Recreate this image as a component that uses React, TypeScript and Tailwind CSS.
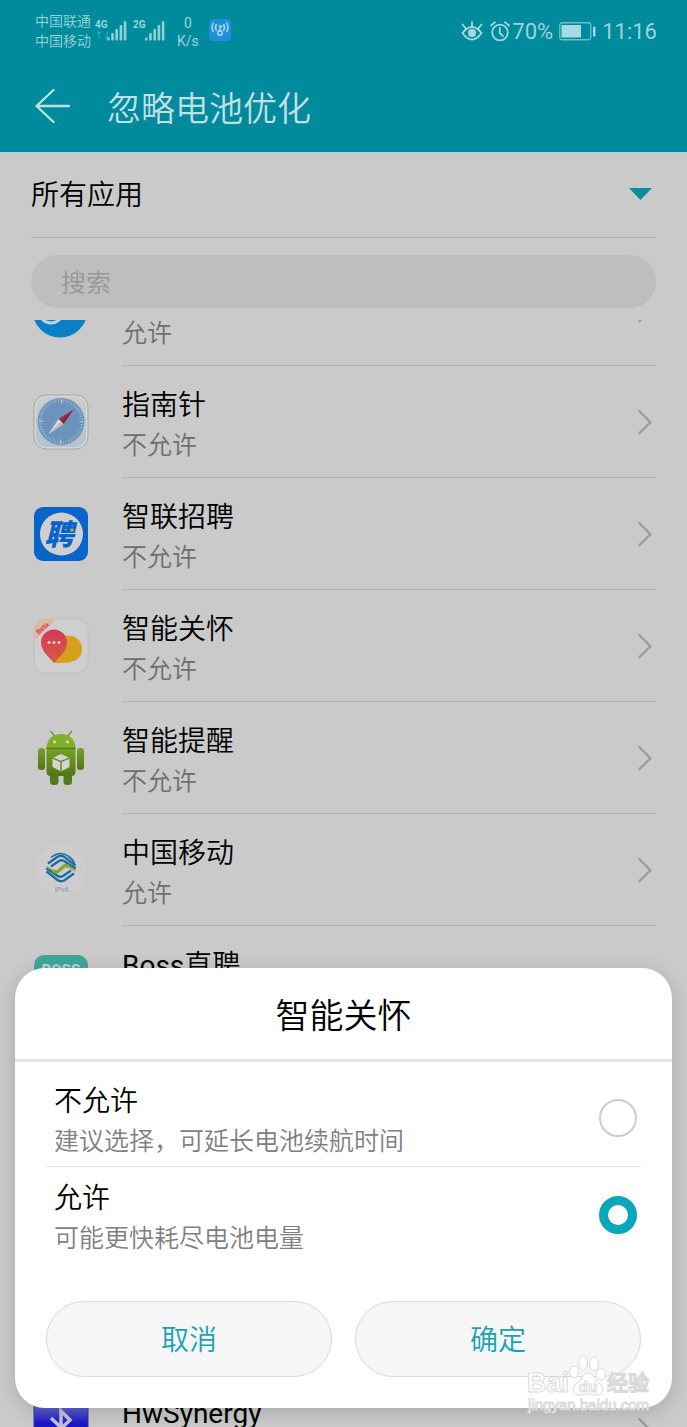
import React from 'react';

interface AppItem {
  id: string;
  name: string;
  status: string;
  icon: React.ReactNode;
}

const SignalBars: React.FC = () => (
  <svg className="w-5 h-[21px]" viewBox="0 0 20 21" fill="#8fd0d8">
    <rect x="0" y="17.500" width="2.600" height="3" rx="1" />
    <rect x="4.200" y="13" width="2.600" height="7.500" rx="1" />
    <rect x="8.400" y="9" width="2.600" height="11.500" rx="1" />
    <rect x="12.600" y="5" width="2.600" height="15.500" rx="1" />
    <rect x="16.800" y="1" width="2.600" height="19.500" rx="1" />
  </svg>
);

const HotspotIcon: React.FC = () => (
  <svg className="w-[22px] h-[22px]" viewBox="0 0 22 22">
    <rect width="22" height="22" rx="4" fill="#1f8fdc" />
    <g fill="none" stroke="#b9dcf0" strokeWidth="1.4" strokeLinecap="round">
      <circle cx="11" cy="14" r="2.300" />
      <path d="M11 11.500V6.500M11 7.500h2" />
      <path d="M7.300 5.500q-1.800 2.800 0 5.800M4.300 4q-2.600 4.300 0 8.600M14.700 5.500q1.800 2.800 0 5.800M17.700 4q2.600 4.300 0 8.600" />
    </g>
  </svg>
);

const EyeIcon: React.FC = () => (
  <svg className="w-[22px] h-[20px]" viewBox="0 0 22 20" fill="none" stroke="#a3d8de" strokeWidth="1.800" strokeLinecap="round">
    <path d="M1.500 12Q6 6 11 6t9.500 6Q16 18.500 11 18.500T1.500 12Z" />
    <circle cx="11" cy="12" r="4" fill="#a3d8de" stroke="none" />
    <path d="M11 1v4.500M1.500 3.500l3 3.800M20.500 3.500l-3 3.800" />
  </svg>
);

const AlarmIcon: React.FC = () => (
  <svg className="w-[20px] h-[21px]" viewBox="0 0 20 21" fill="none" stroke="#a3d8de" strokeWidth="1.800" strokeLinecap="round">
    <circle cx="10" cy="11.500" r="7.800" />
    <path d="M9.800 7v5l3 3M1 4.500L5 1.300M19 4.500L15 1.300" />
  </svg>
);

const BatteryIcon: React.FC = () => (
  <svg className="w-[37px] h-[19px]" viewBox="0 0 37 19">
    <rect x=".75" y=".75" width="31" height="17" rx="2.500" fill="none" stroke="#6dbfca" strokeWidth="1.300" />
    <rect x="2.500" y="3" width="19.500" height="12.500" fill="#a6dbe1" />
    <rect x="34" y="4.500" width="2.500" height="10" rx="1" fill="#a3d8de" />
  </svg>
);

const ChevronIcon: React.FC = () => (
  <svg className="w-[14px] h-[26px]" viewBox="0 0 14 26" fill="none" stroke="#9a9a9a" strokeWidth="2.300" strokeLinecap="round" strokeLinejoin="round">
    <path d="M1.500 2.200L12.500 13.300L1.500 24" />
  </svg>
);

const BrowserIcon: React.FC = () => (
  <svg className="w-14 h-14" viewBox="0 0 56 56">
    <circle cx="27" cy="28" r="27.500" fill="#0a80c4" />
    <circle cx="18" cy="29" r="13.500" fill="#b9d4e2" />
    <circle cx="18" cy="29" r="10.500" fill="#0a80c4" />
    <path d="M50.500 44L56 36V56H42Z" fill="#cacaca" />
  </svg>
);

const CompassIcon: React.FC = () => (
  <svg className="w-14 h-14" viewBox="0 0 56 56">
    <defs>
      <linearGradient id="compassFrame" x1="0" y1="0" x2="0" y2="1">
        <stop offset="0" stopColor="#cdcdcd" />
        <stop offset="1" stopColor="#b4c2ce" />
      </linearGradient>
    </defs>
    <rect x="1" y="1" width="54" height="54" rx="12" fill="#d6d6d6" stroke="#a6a6a6" strokeWidth="1" />
    <rect x="3" y="3" width="50" height="50" rx="10" fill="url(#compassFrame)" />
    <circle cx="28" cy="27.500" r="23.500" fill="#6b93bb" />
    <circle cx="28" cy="27.500" r="21" fill="none" stroke="#9db8d1" strokeWidth="2.500" strokeDasharray="1 1.720" />
    <circle cx="28" cy="27.500" r="20" fill="none" stroke="#c8d5e1" strokeWidth="4.500" strokeDasharray="1 30.416" strokeDashoffset=".5" />
    <path d="M40.500 15.500L25.500 25L30.500 30Z" fill="#a82e3d" />
    <path d="M40.500 15.500L28 27.500L30.500 30Z" fill="#8a2030" />
    <path d="M15.500 40L25.500 25L30.500 30Z" fill="#dadada" />
    <path d="M15.500 40L28 27.500L30.500 30Z" fill="#b9bec4" />
  </svg>
);

const ZhaopinIcon: React.FC = () => (
  <svg className="w-14 h-14" viewBox="0 0 56 56">
    <rect x="1" y="1" width="54" height="54" rx="9" fill="#0864c9" />
    <circle cx="28.500" cy="28" r="21.500" fill="#cfcfd1" />
    <text
      x="26"
      y="39"
      textAnchor="middle"
      fontSize="29"
      fontWeight="900"
      fontStyle="italic"
      fontFamily="'Noto Sans CJK SC', sans-serif"
      fill="#0864c9"
    >
      聘
    </text>
    <circle cx="39" cy="24" r="1.800" fill="#8fba3c" />
  </svg>
);

const CareIcon: React.FC = () => (
  <svg className="w-14 h-14" viewBox="0 0 56 56">
    <defs>
      <linearGradient id="carePin" x1="0" y1="0" x2="0" y2="1">
        <stop offset="0" stopColor="#d23b58" />
        <stop offset="1" stopColor="#d65a42" />
      </linearGradient>
      <clipPath id="careClip">
        <rect x="1" y="1" width="54" height="54" rx="12" />
      </clipPath>
    </defs>
    <rect x="1" y="1" width="54" height="54" rx="12" fill="#cfcfcf" stroke="#bdbdbd" strokeWidth=".8" />
    <g clipPath="url(#careClip)">
      <path d="M0 24L24 0H8L0 8Z" fill="#e0b4a6" />
      <text x="11" y="12" transform="rotate(-42 11 12)" textAnchor="middle" fontSize="7" fontWeight="700" fontFamily="Roboto, sans-serif" fill="#cf4a42">
        Beta
      </text>
    </g>
    <path d="M22 45C31 45 49 46 49 31C49 22 42 17.500 35 17.500C25 17.500 20 28 22 45Z" fill="#d6a01d" />
    <path d="M21 45C15 38 8 32.500 8 24.500C8 17 14 11.500 21 11.500C28 11.500 34 17 34 24.500C34 33 27 38 21 45Z" fill="url(#carePin)" />
    <g fill="#ecd5d5">
      <circle cx="16" cy="24.500" r="1.500" />
      <circle cx="21" cy="24.500" r="1.500" />
      <circle cx="26" cy="24.500" r="1.500" />
    </g>
  </svg>
);

const AndroidIcon: React.FC = () => (
  <svg className="w-14 h-14" viewBox="0 0 56 56">
    <defs>
      <linearGradient id="robot" x1="0" y1="0" x2="0" y2="1">
        <stop offset="0" stopColor="#76a325" />
        <stop offset="1" stopColor="#4f7619" />
      </linearGradient>
    </defs>
    <path d="M18 1.500l4 5M38.500 1.500l-4 5" stroke="#6f8f3e" strokeWidth="1.300" strokeLinecap="round" />
    <rect x="17" y="42" width="8.500" height="13" rx="3.500" fill="#527a1a" />
    <rect x="30.500" y="42" width="8.500" height="13" rx="3.500" fill="#527a1a" />
    <rect x="5" y="18" width="7" height="22" rx="3" fill="url(#robot)" />
    <rect x="44" y="18" width="7" height="22" rx="3" fill="url(#robot)" />
    <path d="M13.500 18H42.500V42Q42.500 46 38 46H18Q13.500 46 13.500 42Z" fill="url(#robot)" />
    <path d="M13.500 18C14 9 20 4 28 4S42 9 42.500 18Z" fill="#7fb02b" />
    <path d="M13.500 18.300H42.500" stroke="#4f7619" strokeWidth="1.200" />
    <circle cx="21.500" cy="12" r="1.400" fill="#d9e2cc" />
    <circle cx="34.500" cy="12" r="1.400" fill="#d9e2cc" />
    <path d="M28 24L36.500 28V37L28 41.500L19.500 37V28Z" fill="#d2d4cd" />
    <path d="M19.500 28L28 31.500L36.500 28M28 31.500V41.500" fill="none" stroke="#587f20" strokeWidth="1.300" />
  </svg>
);

const ChinaMobileIcon: React.FC = () => (
  <svg className="w-14 h-14" viewBox="0 0 56 56">
    <circle cx="28" cy="28" r="26" fill="#cdcdcd" />
    <g fill="none" strokeLinejoin="round">
      <g stroke="#1a6ea3">
        <path d="M18 15.500Q23 11.500 28 11.500Q32 11.500 35 14Q40 17.500 41.500 21.500" strokeWidth="1.600" />
        <path d="M15 21.500L25 14.500Q28.500 12.800 32 15.300Q37 19.500 42.500 23.500" strokeWidth="2.400" />
        <path d="M18 24.500L26 19Q29 17.200 32 19.500Q36.500 23 42.800 26.500" strokeWidth="2.400" />
        <path d="M38 28.500L30 34Q27 35.800 24 33.500Q19.500 30 13.200 26.500" strokeWidth="2.400" />
        <path d="M41 31.500L31 38.500Q27.500 40.200 24 37.700Q19 33.500 13.500 29.500" strokeWidth="2.400" />
      </g>
      <path d="M13.300 24.500Q18 27 21 29.500Q23.500 31 26 29L30.500 24.500Q33 22.300 35.500 24.500Q38.500 27 42.600 28.800" stroke="#84a92a" strokeWidth="1.300" />
      <path d="M20 28.500Q23 31 25.500 29L30.500 24.500Q33 22.500 36 25" stroke="#84a92a" strokeWidth="3.400" />
    </g>
    <text x="28.500" y="50" textAnchor="middle" fontSize="7" fontFamily="Roboto, sans-serif" fill="#7b98ad">
      IPv6
    </text>
  </svg>
);

const BossIcon: React.FC = () => (
  <svg className="w-14 h-14" viewBox="0 0 56 56">
    <rect x="1" y="1" width="54" height="54" rx="10" fill="#43a59a" />
    <text x="28" y="21" textAnchor="middle" fontSize="15" fontWeight="900" fontFamily="Roboto, sans-serif" fill="#b5d5d0">
      BOSS
    </text>
  </svg>
);

const BluetoothIcon: React.FC = () => (
  <svg className="w-14 h-14" viewBox="0 0 56 56">
    <defs>
      <linearGradient id="bluetooth" x1="0" y1="0" x2="0" y2="1">
        <stop offset="0" stopColor="#7474cc" />
        <stop offset=".38" stopColor="#1818c8" />
        <stop offset="1" stopColor="#0909a0" />
      </linearGradient>
    </defs>
    <rect x="1" y="1" width="54" height="54" rx="4" fill="url(#bluetooth)" stroke="#3434a8" />
    <path d="M18 16L37 34L28 43V9L37 18L18 36" fill="none" stroke="#c4c4d8" strokeWidth="3.500" />
  </svg>
);

const topApps: AppItem[] = [
  { id: 'browser', name: '', status: '允许', icon: <BrowserIcon /> },
  { id: 'compass', name: '指南针', status: '不允许', icon: <CompassIcon /> },
  { id: 'zhaopin', name: '智联招聘', status: '不允许', icon: <ZhaopinIcon /> },
  { id: 'care', name: '智能关怀', status: '不允许', icon: <CareIcon /> },
  { id: 'reminder', name: '智能提醒', status: '不允许', icon: <AndroidIcon /> },
  { id: 'mobile', name: '中国移动', status: '允许', icon: <ChinaMobileIcon /> },
  { id: 'boss', name: 'Boss直聘', status: '', icon: <BossIcon /> },
];

const bottomApps: AppItem[] = [
  { id: 'synergy', name: 'HwSynergy', status: '', icon: <BluetoothIcon /> },
];

const options = [
  { value: 'deny', label: '不允许', hint: '建议选择，可延长电池续航时间' },
  { value: 'allow', label: '允许', hint: '可能更快耗尽电池电量' },
];

const StatusBar: React.FC = () => (
  <div className="flex h-[60px] items-center justify-between pl-[35px] pr-[30px] text-[#9ad3da]">
    <div className="flex items-center">
      <div className="pt-0.5 text-[14px] leading-5">
        <div>中国联通</div>
        <div>中国移动</div>
      </div>
      <div className="ml-1 flex items-end">
        <div className="flex h-[22px] w-3 flex-col text-[10px] font-bold leading-3">
          <span>4G</span>
          <span className="text-[8px] leading-[10px] text-[#4fabb8]">↑↓</span>
        </div>
        <SignalBars />
        <div className="ml-1.5 flex h-[22px] w-3 flex-col text-[10px] font-bold leading-3">2G</div>
        <SignalBars />
      </div>
      <div className="ml-3 mr-2.5 pt-1 text-center text-[14px] leading-[18px]">
        <div>0</div>
        <div>K/s</div>
      </div>
      <HotspotIcon />
    </div>
    <div className="flex items-center pt-0.5 text-[22px]">
      <EyeIcon />
      <span className="ml-[7px]">
        <AlarmIcon />
      </span>
      <span className="ml-0.5">70%</span>
      <span className="ml-1.5 mr-1.5">
        <BatteryIcon />
      </span>
      <span>11:16</span>
    </div>
  </div>
);

const AppRow: React.FC<{ app: AppItem }> = ({ app }) => (
  <li className="flex h-28 shrink-0 items-center gap-[33px] first:-mt-[66px]">
    {app.icon}
    <div className="flex h-28 flex-1 items-center justify-between border-b border-[#b3b3b3] pr-1">
      <div className="pt-2">
        <div className="h-10 text-[28px] leading-10 text-black">{app.name}</div>
        <div className="h-10 text-[25px] leading-10 text-[#6e6e6e]">{app.status}</div>
      </div>
      <ChevronIcon />
    </div>
  </li>
);

const Watermark: React.FC = () => (
  <div className="pointer-events-none absolute bottom-[14px] right-[38px] font-bold text-white [-webkit-text-stroke:1px_#dadada]">
    <div className="flex items-end justify-end">
      <span className="font-['Liberation_Sans',sans-serif] text-[27px] leading-7">Bai</span>
      <svg className="h-[42px] w-[38px]" viewBox="0 0 38 42" fill="#ffffff" stroke="#dadada" strokeWidth="1">
        <ellipse cx="5" cy="17" rx="4.300" ry="6" />
        <ellipse cx="14" cy="8" rx="4.500" ry="7" />
        <ellipse cx="25" cy="9" rx="4.500" ry="7" />
        <ellipse cx="32" cy="19" rx="4.500" ry="6" />
        <path d="M19 18C25 18 25 25 31 29C36 33 34 40 28 40C24 40 22 39 19 39S13 40 10 40C4 40 2 33 7 29C13 25 13 18 19 18Z" />
        <text x="19" y="37" textAnchor="middle" fontSize="15" fontFamily="'Liberation Sans', sans-serif">
          du
        </text>
      </svg>
      <span className="text-[21px] leading-7">经验</span>
    </div>
    <div className="text-right font-['Liberation_Sans',sans-serif] text-[15px] font-normal leading-4">jingyan.baidu.com</div>
  </div>
);

export default function App() {
  const [selected, setSelected] = React.useState('allow');

  return (
    <div className="relative flex h-screen flex-col overflow-hidden bg-[#cacaca] font-[Roboto,'Noto_Sans_CJK_SC_DemiLight','Noto_Sans_CJK_SC',sans-serif]">
      {/* Header */}
      <header className="h-[153px] shrink-0 border-b border-[#a3d6dd] bg-[#008b9c]">
        <StatusBar />
        <div className="flex h-[92px] items-center pl-[35px] text-[#c3dfe3]">
          <button type="button" aria-label="返回">
            <svg className="h-9 w-9" viewBox="0 0 36 36" fill="none" stroke="currentColor" strokeWidth="2.300" strokeLinecap="round" strokeLinejoin="round">
              <path d="M18.500 2L1.500 18L18.500 34M1.500 18H34" />
            </svg>
          </button>
          <h1 className="ml-9 pt-1.5 text-[34px] font-[350] leading-[46px]">忽略电池优化</h1>
        </div>
      </header>

      {/* Filter and search */}
      <div className="shrink-0 px-[31px]">
        <div className="relative border-b border-[#b0b0b0]">
          <select aria-label="所有应用" className="block h-[84px] w-full appearance-none bg-transparent pt-0.5 text-[28px] text-black outline-none">
            <option>所有应用</option>
          </select>
          <svg className="pointer-events-none absolute right-1 top-[35px] h-3 w-[23px]" viewBox="0 0 23 12" fill="#0a8c9c">
            <path d="M0 0H23L11.500 12Z" />
          </svg>
        </div>
        <input
          type="search"
          aria-label="搜索"
          placeholder="搜索"
          className="mt-[17px] block h-[53px] w-full appearance-none rounded-full bg-[#bebebe] px-[30px] pt-1 text-[25px] text-black outline-none placeholder:text-[#979797]"
        />
      </div>

      {/* App list */}
      <ul className="mt-3 flex min-h-0 flex-1 flex-col overflow-hidden pl-[33px] pr-[31px]">
        {topApps.map((app) => (
          <AppRow key={app.id} app={app} />
        ))}
        <li aria-hidden="true" className="h-[336px] shrink-0" />
        {bottomApps.map((app) => (
          <AppRow key={app.id} app={app} />
        ))}
      </ul>

      {/* Dialog */}
      <form
        role="dialog"
        aria-labelledby="dialog-title"
        onSubmit={(e) => e.preventDefault()}
        className="absolute inset-x-[15px] bottom-[19px] rounded-[30px] bg-white shadow-[0_4px_20px_rgba(0,0,0,0.16)]"
      >
        <h2 id="dialog-title" className="border-b-[3px] border-[#e4e4e4] pb-5 pt-[25px] text-center text-[34px] font-[350] leading-[46px] text-black">
          智能关怀
        </h2>
        <div className="px-[31px] pb-[31px] pt-2">
          {options.map((option) => (
            <label
              key={option.value}
              className="flex h-[97px] items-center justify-between border-b border-[#e2e2e2] pl-2 pr-1 last-of-type:border-transparent"
            >
              <span className="flex flex-col pt-2">
                <span className="text-[28px] leading-10 text-black">{option.label}</span>
                <span className="text-[25px] leading-10 text-[#808080]">{option.hint}</span>
              </span>
              <input
                type="radio"
                name="battery"
                value={option.value}
                checked={selected === option.value}
                onChange={() => setSelected(option.value)}
                className="h-[38px] w-[38px] appearance-none rounded-full border-2 border-[#cccccc] bg-white checked:border-[9px] checked:border-[#0aa7ba]"
              />
            </label>
          ))}
          <div className="mt-[37px] grid grid-cols-2 gap-[23px] text-[28px] text-[#17a3b3]">
            <button type="button" className="h-[76px] rounded-full border border-[#d9d9d9] bg-[#f6f6f6] pt-1">
              取消
            </button>
            <button type="submit" className="h-[76px] rounded-full border border-[#d9d9d9] bg-[#f6f6f6] pt-1">
              确定
            </button>
          </div>
        </div>
      </form>

      <Watermark />
    </div>
  );
}
